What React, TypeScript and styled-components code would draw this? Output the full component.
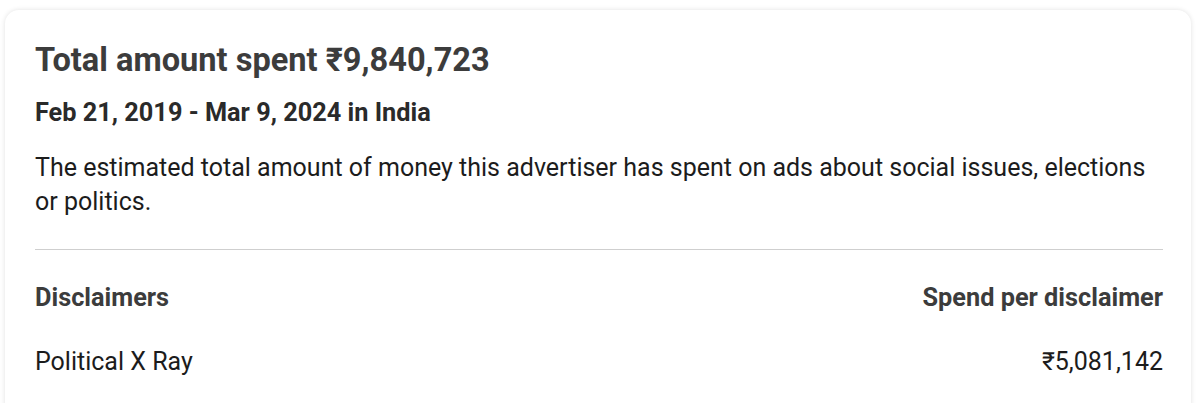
import styled, { createGlobalStyle } from "styled-components";

const GlobalStyle = createGlobalStyle`
  body {
    margin: 0;
    background: #ffffff;
    font-family: Roboto, "Liberation Sans", Arial, sans-serif;
  }
`;

interface DisclaimerRow {
  name: string;
  spend: string;
}

const rows: DisclaimerRow[] = [{ name: "Political X Ray", spend: "₹5,081,142" }];

function App() {
  return (
    <>
      <GlobalStyle />
      <Page>
        <Card>
          <Title>Total amount spent ₹9,840,723</Title>
          <DateRange>Feb 21, 2019 - Mar 9, 2024 in India</DateRange>
          <Description>
            The estimated total amount of money this advertiser has spent on ads about
            social issues, elections or politics.
          </Description>
          <Divider />
          <TableRow $header>
            <span>Disclaimers</span>
            <span>Spend per disclaimer</span>
          </TableRow>
          {rows.map((row) => (
            <TableRow key={row.name}>
              <span>{row.name}</span>
              <span>{row.spend}</span>
            </TableRow>
          ))}
        </Card>
      </Page>
    </>
  );
}

const Page = styled.div`
  height: 403px;
  overflow: hidden;
  padding: 10px 9px 0 5px;
  box-sizing: border-box;
`;

const Card = styled.div`
  background: #ffffff;
  border-radius: 14px;
  box-shadow: 0 0 5px rgba(0, 0, 0, 0.12);
  padding: 30px 28px 40px 30px;
  min-height: 420px;
  box-sizing: border-box;
`;

const Title = styled.h2`
  margin: 0;
  font-size: 32.6px;
  line-height: 40px;
  font-weight: 700;
  color: #3c3c3c;
`;

const DateRange = styled.div`
  margin-top: 16px;
  font-size: 25.3px;
  line-height: 34px;
  font-weight: 700;
  color: #2a2a2a;
`;

const Description = styled.p`
  margin: 21px 0 0;
  font-size: 25px;
  line-height: 34px;
  color: #1c1c1c;
`;

const Divider = styled.hr`
  margin: 30px 0 0;
  border: none;
  border-top: 1.5px solid #cfcfcf;
`;

const TableRow = styled.div<{ $header?: boolean }>`
  display: flex;
  justify-content: space-between;
  margin-top: ${(p) => (p.$header ? "31px" : "30px")};
  font-size: ${(p) => (p.$header ? "25.3px" : "25px")};
  line-height: 34px;
  font-weight: ${(p) => (p.$header ? 700 : 400)};
  color: ${(p) => (p.$header ? "#3c3c3c" : "#1c1c1c")};
`;

export default App;
